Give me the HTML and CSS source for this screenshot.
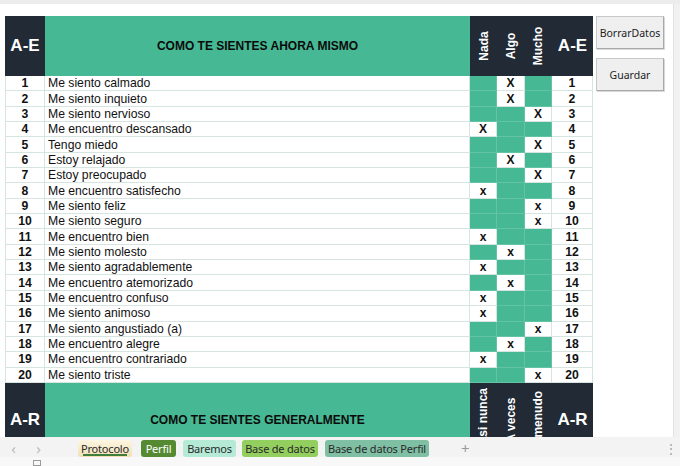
FILE: index.html
```html
<!DOCTYPE html>
<html lang="es">
<head>
<meta charset="utf-8">
<title>Protocolo</title>
<link rel="stylesheet" href="styles.css">
</head>
<body>
<div class="app">
  <div class="topband"></div>
  <div class="main">
    <div class="sheet">
      <div class="grid">
        <div class="h dark big">A-E</div>
        <div class="h green title">COMO TE SIENTES AHORA MISMO</div>
        <div class="h dark vert"><span>Nada</span></div>
        <div class="h dark vert"><span>Algo</span></div>
        <div class="h dark vert"><span>Mucho</span></div>
        <div class="h dark big">A-E</div>

        <div class="c num">1</div><div class="c desc">Me siento calmado</div><div class="c g"></div><div class="c mk">X</div><div class="c g"></div><div class="c num">1</div>
        <div class="c num">2</div><div class="c desc">Me siento inquieto</div><div class="c g"></div><div class="c mk">X</div><div class="c g"></div><div class="c num">2</div>
        <div class="c num">3</div><div class="c desc">Me siento nervioso</div><div class="c g"></div><div class="c g"></div><div class="c mk">X</div><div class="c num">3</div>
        <div class="c num">4</div><div class="c desc">Me encuentro descansado</div><div class="c mk">X</div><div class="c g"></div><div class="c g"></div><div class="c num">4</div>
        <div class="c num">5</div><div class="c desc">Tengo miedo</div><div class="c g"></div><div class="c g"></div><div class="c mk">X</div><div class="c num">5</div>
        <div class="c num">6</div><div class="c desc">Estoy relajado</div><div class="c g"></div><div class="c mk">X</div><div class="c g"></div><div class="c num">6</div>
        <div class="c num">7</div><div class="c desc">Estoy preocupado</div><div class="c g"></div><div class="c g"></div><div class="c mk">X</div><div class="c num">7</div>
        <div class="c num">8</div><div class="c desc">Me encuentro satisfecho</div><div class="c mk">x</div><div class="c g"></div><div class="c g"></div><div class="c num">8</div>
        <div class="c num">9</div><div class="c desc">Me siento feliz</div><div class="c g"></div><div class="c g"></div><div class="c mk">x</div><div class="c num">9</div>
        <div class="c num">10</div><div class="c desc">Me siento seguro</div><div class="c g"></div><div class="c g"></div><div class="c mk">x</div><div class="c num">10</div>
        <div class="c num">11</div><div class="c desc">Me encuentro bien</div><div class="c mk">x</div><div class="c g"></div><div class="c g"></div><div class="c num">11</div>
        <div class="c num">12</div><div class="c desc">Me siento molesto</div><div class="c g"></div><div class="c mk">x</div><div class="c g"></div><div class="c num">12</div>
        <div class="c num">13</div><div class="c desc">Me siento agradablemente</div><div class="c mk">x</div><div class="c g"></div><div class="c g"></div><div class="c num">13</div>
        <div class="c num">14</div><div class="c desc">Me encuentro atemorizado</div><div class="c g"></div><div class="c mk">x</div><div class="c g"></div><div class="c num">14</div>
        <div class="c num">15</div><div class="c desc">Me encuentro confuso</div><div class="c mk">x</div><div class="c g"></div><div class="c g"></div><div class="c num">15</div>
        <div class="c num">16</div><div class="c desc">Me siento animoso</div><div class="c mk">x</div><div class="c g"></div><div class="c g"></div><div class="c num">16</div>
        <div class="c num">17</div><div class="c desc">Me siento angustiado (a)</div><div class="c g"></div><div class="c g"></div><div class="c mk">x</div><div class="c num">17</div>
        <div class="c num">18</div><div class="c desc">Me encuentro alegre</div><div class="c g"></div><div class="c mk">x</div><div class="c g"></div><div class="c num">18</div>
        <div class="c num">19</div><div class="c desc">Me encuentro contrariado</div><div class="c mk">x</div><div class="c g"></div><div class="c g"></div><div class="c num">19</div>
        <div class="c num">20</div><div class="c desc">Me siento triste</div><div class="c g"></div><div class="c g"></div><div class="c mk">x</div><div class="c num">20</div>

        <div class="h2 dark big">A-R</div>
        <div class="h2 green title">COMO TE SIENTES GENERALMENTE</div>
        <div class="h2 dark vert"><span>Casi nunca</span></div>
        <div class="h2 dark vert"><span>A veces</span></div>
        <div class="h2 dark vert"><span>A menudo</span></div>
        <div class="h2 dark big">A-R</div>
      </div>
      <div class="side">
        <button class="btn">BorrarDatos</button>
        <button class="btn">Guardar</button>
      </div>
    </div>
    <div class="vscroll"></div>
  </div>
  <div class="tabbar">
    <span class="arrow">&#x2039;</span>
    <span class="arrow">&#x203A;</span>
    <div class="tabs">
      <span class="tab t-proto">Protocolo</span>
      <span class="tab t-perfil">Perfil</span>
      <span class="tab t-bar">Baremos</span>
      <span class="tab t-bd">Base de datos</span>
      <span class="tab t-bdp">Base de datos Perfil</span>
    </div>
    <span class="plus">+</span>
    <span class="dots">&#x22EE;</span>
  </div>
  <div class="status">
    <svg class="sicon" width="8" height="6" viewBox="0 0 8 6"><rect x="0.5" y="0.5" width="7" height="5" fill="none" stroke="#9a9a9a"/></svg>
  </div>
</div>
</body>
</html>
```
FILE: styles.css
```css
* { box-sizing: border-box; }
html, body { margin: 0; padding: 0; }
body {
  width: 680px;
  height: 466px;
  overflow: hidden;
  background: #ffffff;
  font-family: "Liberation Sans", Arial, sans-serif;
}
.app {
  width: 680px;
  height: 466px;
  display: flex;
  flex-direction: column;
}
.topband {
  height: 4px;
  background: #ececec;
  flex: none;
}
.main {
  flex: none;
  height: 433px;
  display: flex;
  overflow: hidden;
}
.sheet {
  flex: 1;
  display: flex;
  align-items: flex-start;
  padding: 12px 0 0 5px;
  background: #ffffff;
  overflow: hidden;
}
.vscroll {
  width: 7px;
  flex: none;
  background: #f1f1f1;
  border-left: 1px solid #e2e2e2;
}
.grid {
  display: grid;
  grid-template-columns: 40px 425px 27px 28px 27px 41px;
  grid-template-rows: 60px repeat(20, 15.35px) 74px;
  flex: none;
}
.h, .h2 {
  display: flex;
  align-items: center;
  justify-content: center;
  overflow: hidden;
}
.dark { background: #212a35; color: #ffffff; }
.green { background: #46b994; color: #0b0b0b; }
.big { font-size: 17px; font-weight: bold; }
.title { font-size: 12px; font-weight: bold; }
.vert span {
  display: block;
  transform: rotate(-90deg);
  white-space: nowrap;
  font-size: 12px;
  font-weight: bold;
}
.c {
  border-right: 1px solid #d6e5df;
  border-bottom: 1px solid #d6e5df;
  font-size: 12.2px;
  line-height: 14px;
  display: flex;
  align-items: center;
  color: #111;
  background: #fff;
}
.num {
  justify-content: center;
  font-weight: bold;
}
.grid > .num:nth-child(6n+7) { border-left: 1px solid #d6e5df; }
.desc { padding-left: 3px; }
.g { background: #46b994; border-color: #62c4a5; }
.mk {
  justify-content: center;
  font-weight: bold;
  font-size: 12px;
}
.side {
  display: flex;
  flex-direction: column;
  gap: 9px;
  margin-left: 3px;
}
.btn {
  width: 68px;
  height: 33px;
  padding: 0;
  background: #efefef;
  border: 1px solid #c8c8c8;
  border-right-color: #a9a9a9;
  border-bottom-color: #a9a9a9;
  box-shadow: 1px 1px 0 #d8d8d8;
  font-family: "Noto Sans", "Open Sans", sans-serif;
  font-size: 10.5px;
  color: #222;
  white-space: nowrap;
}
.tabbar {
  flex: none;
  height: 20px;
  padding-top: 2px;
  background: #f3f3f3;
  display: flex;
  align-items: center;
  font-family: "Noto Sans", "Open Sans", sans-serif;
  position: relative;
}
.arrow {
  color: #b9b9b9;
  font-size: 15px;
  width: 25px;
  text-align: center;
  line-height: 16px;
}
.arrow:first-child { margin-left: 1px; }
.tabs {
  display: flex;
  margin-left: 27px;
}
.tab {
  height: 17px;
  line-height: 17px;
  font-size: 11px;
  letter-spacing: -0.2px;
  border-radius: 3px;
  color: #2a2a2a;
  white-space: nowrap;
  display: flex;
  justify-content: center;
  overflow: hidden;
  margin-right: 7px;
}
.t-proto {
  width: 54px;
  margin-right: 9px;
  background: linear-gradient(#fdf6e1, #efdfb6);
  position: relative;
}
.t-proto::after {
  content: "";
  position: absolute;
  left: 5px;
  right: 5px;
  bottom: 1px;
  height: 2px;
  background: #3f7d3a;
}
.t-perfil { width: 35px; background: #558a32; color: #ffffff; }
.t-bar { width: 53px; margin-right: 6px; background: #b5ead7; }
.t-bd { width: 76px; background: #93cf5f; }
.t-bdp { width: 104px; margin-right: 0; background: #7fbfa3; }
.plus {
  margin-left: 32px;
  color: #9a9a9a;
  font-size: 15px;
}
.dots {
  position: absolute;
  right: 3px;
  top: 3px;
  color: #a0a0a0;
  font-size: 12px;
}
.status {
  flex: none;
  height: 9px;
  background: #f8f8f8;
  padding: 3px 0 0 33px;
  overflow: hidden;
}
.sicon { display: block; }
```
